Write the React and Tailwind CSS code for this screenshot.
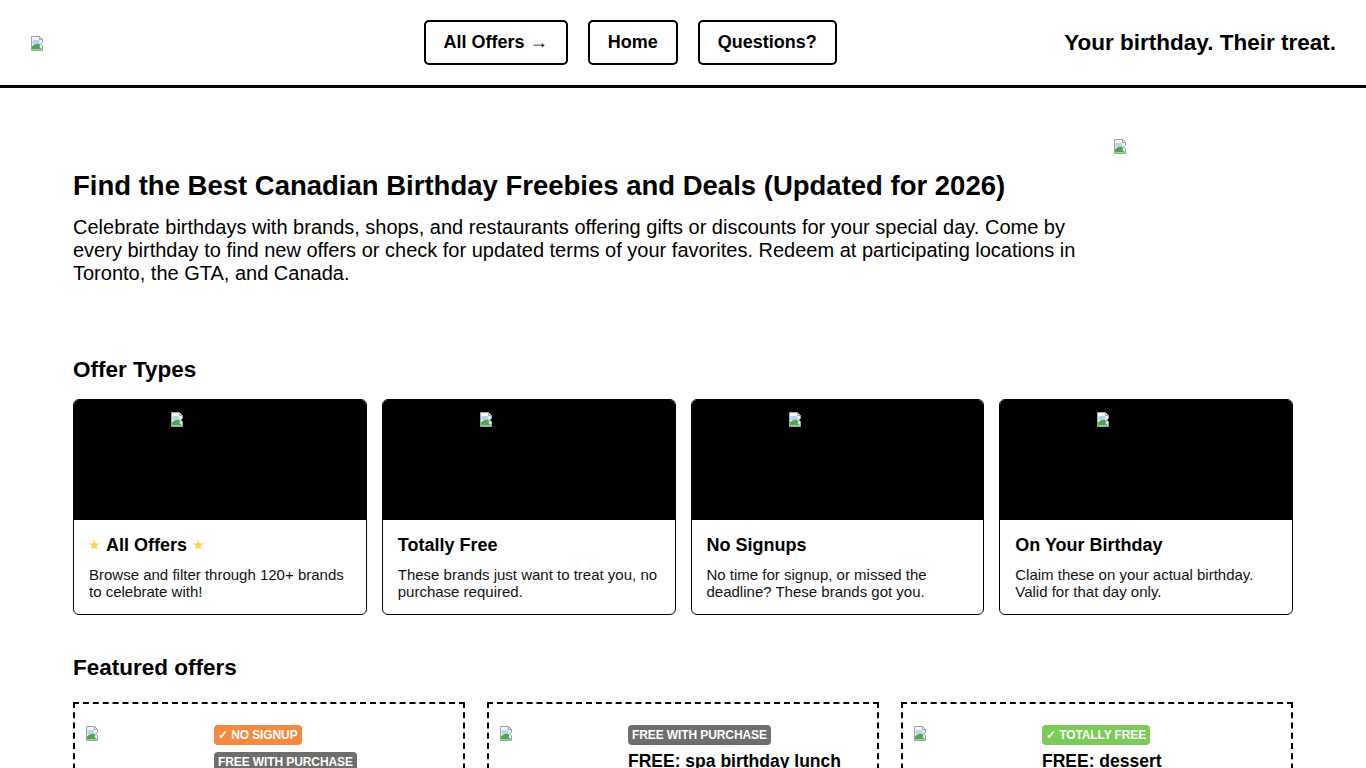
import React from 'react'

const offerTypes = [
  { title: 'All Offers', stars: true, text: 'Browse and filter through 120+ brands to celebrate with!' },
  { title: 'Totally Free', text: 'These brands just want to treat you, no purchase required.' },
  { title: 'No Signups', text: 'No time for signup, or missed the deadline? These brands got you.' },
  { title: 'On Your Birthday', text: 'Claim these on your actual birthday. Valid for that day only.' },
]

const featured = [
  { badges: [{ label: '✓ NO SIGNUP', color: 'bg-[#f5893f]' }, { label: 'FREE WITH PURCHASE', color: 'bg-[#6e6e6e]' }], title: 'FREE: birthday drink' },
  { badges: [{ label: 'FREE WITH PURCHASE', color: 'bg-[#6e6e6e]' }], title: 'FREE: spa birthday lunch' },
  { badges: [{ label: '✓ TOTALLY FREE', color: 'bg-[#7acb58]' }], title: 'FREE: dessert' },
]

function BrokenImg({ className = '' }) {
  return (
    <svg width="16" height="16" viewBox="0 0 16 16" className={className}>
      <path d="M1.5 1.5h8l3 3v3l-2 1.5 2 1.5v5h-11z" fill="#f4f6f8" stroke="#9aa3ad" />
      <path d="M9.5 1.5v3h3" fill="none" stroke="#9aa3ad" />
      <rect x="2.5" y="5" width="7" height="4" fill="#b9d3ee" />
      <path d="M2 14.5v-3c2-2 4-3 7-2.5l1.5 1-1 2 3 2.5z" fill="#4ca84a" />
    </svg>
  )
}

function Badge({ label, color }) {
  return (
    <span className={`inline-block ${color} text-white text-[12px] font-bold leading-[20px] px-[4px] rounded-[4px] tracking-[-0.1px]`}>
      {label}
    </span>
  )
}

export default function App() {
  return (
    <div className="min-h-screen bg-white text-black font-['Liberation_Sans',Arial,sans-serif]">
      {/* Header */}
      <header className="h-[88px] border-b-[3px] border-black px-[30px] flex items-center justify-between">
        <div className="w-[166px]">
          <BrokenImg />
        </div>
        <nav className="flex gap-5">
          {['All Offers →', 'Home', 'Questions?'].map((l) => (
            <a key={l} className="h-[45px] px-[18px] flex items-center border-2 border-black rounded-[5px] text-[18px] font-bold">
              {l}
            </a>
          ))}
        </nav>
        <div className="text-[22.5px] font-bold">Your birthday. Their treat.</div>
      </header>

      <main className="px-[73px]">
        {/* Hero */}
        <section className="pt-[50px] flex gap-5 items-start">
          <div className="w-[1020px] pt-[33px]">
            <h1 className="text-[27.5px] leading-[30px] font-bold">
              Find the Best Canadian Birthday Freebies and Deals (Updated for 2026)
            </h1>
            <p className="mt-[15px] text-[20px] leading-[23px]">
              Celebrate birthdays with brands, shops, and restaurants offering gifts or discounts for your special day. Come by every birthday to find new offers or check for updated terms of your favorites. Redeem at participating locations in Toronto, the GTA, and Canada.
            </p>
          </div>
          <BrokenImg />
        </section>

        {/* Offer types */}
        <h2 className="mt-[72px] text-[22.5px] leading-[26px] font-bold">Offer Types</h2>
        <div className="mt-4 grid grid-cols-4 gap-[15px]">
          {offerTypes.map((o) => (
            <div key={o.title} className="border border-black rounded-[6px] overflow-hidden">
              <div className="h-[120px] bg-black pl-[96px] pt-[11px]">
                <BrokenImg />
              </div>
              <div className="px-[15px] pt-[14px] pb-[14px]">
                <div className="text-[18px] leading-[22px] font-bold flex items-center gap-[6px]">
                  {o.stars && <span className="text-[12px] text-[#f7d54a]">★</span>}
                  <span>{o.title}</span>
                  {o.stars && <span className="text-[12px] text-[#f7d54a]">★</span>}
                </div>
                <p className="mt-[10px] text-[15px] leading-[17px] text-[#111]">{o.text}</p>
              </div>
            </div>
          ))}
        </div>

        {/* Featured */}
        <h2 className="mt-[40px] text-[22.5px] leading-[26px] font-bold">Featured offers</h2>
        <div className="mt-[21px] grid grid-cols-3 gap-[22px] pb-10">
          {featured.map((f) => (
            <div key={f.title} className="border-2 border-dashed border-black px-[10px] pt-[21px] pb-4 flex gap-[9px]">
              <div className="w-[120px] shrink-0">
                <BrokenImg />
              </div>
              <div className="flex flex-col items-start gap-[7px]">
                {f.badges.map((b) => (
                  <Badge key={b.label} {...b} />
                ))}
                <div className="text-[17.5px] leading-[22px] font-bold -mt-[2px]">{f.title}</div>
                <p className="text-[15px] leading-[17px]">Redeem at participating locations.</p>
              </div>
            </div>
          ))}
        </div>
      </main>
    </div>
  )
}
